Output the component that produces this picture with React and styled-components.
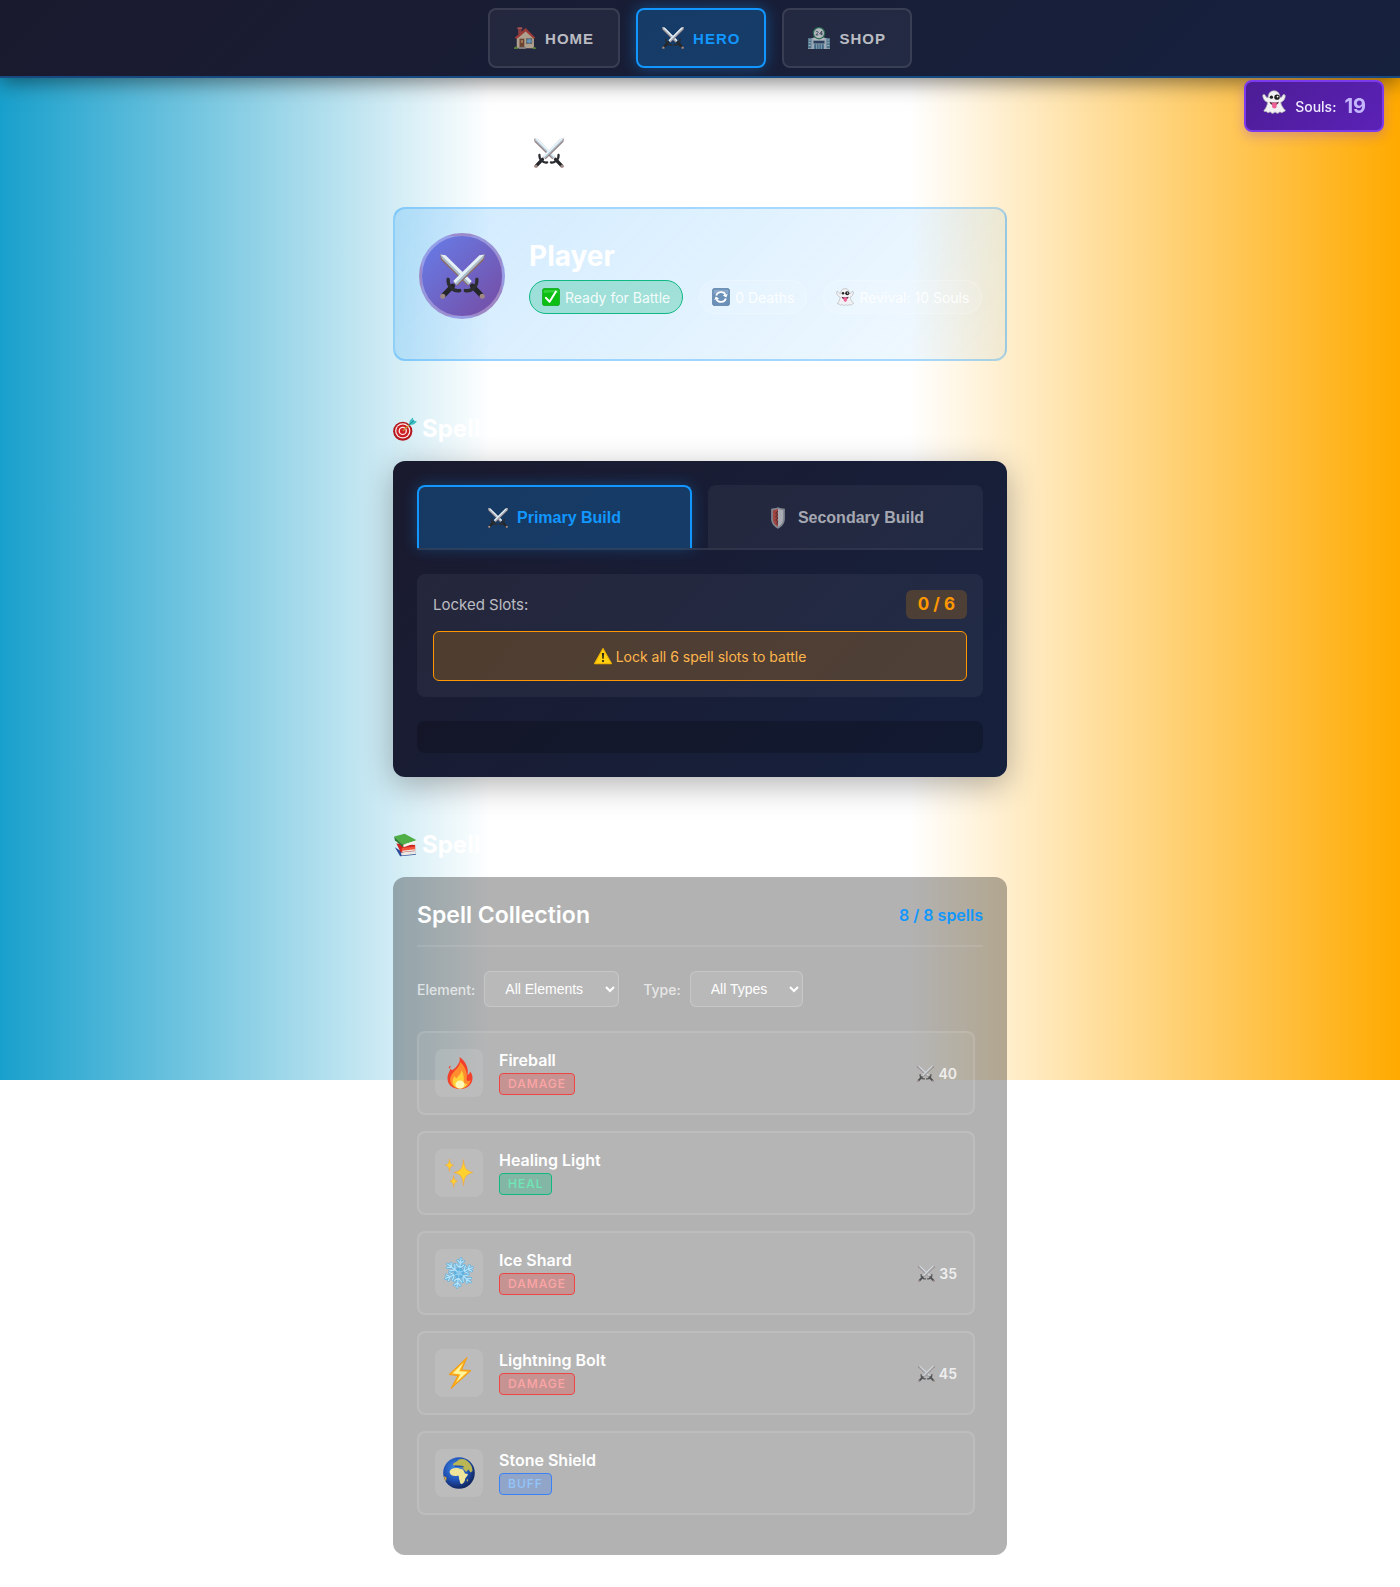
import React from "react";
import styled, { createGlobalStyle, css } from "styled-components";

const GlobalStyle = createGlobalStyle`
  *, *::before, *::after { box-sizing: border-box; }
  body {
    margin: 0;
    background: #ffffff;
    color: #ffffff;
    font-family: Inter, "Noto Sans", sans-serif;
    font-size: 16px;
  }
  h1, h2, h3, p, ul { margin: 0; padding: 0; }
  ul { list-style: none; }
`;

const uiFont = `"Liberation Sans", Arial, sans-serif`;

/* ---------- icons ---------- */

const Icon = styled.svg`
  display: block;
  flex: none;
  width: ${(p) => p.$size}px;
  height: ${(p) => p.$size}px;
  opacity: ${(p) => (p.$dim ? 0.7 : 1)};
`;

const Sword = ({ flip }) => (
  <g transform={flip ? "translate(32 0) scale(-1 1)" : undefined}>
    <path d="M31.8.4 31.4 4 12.4 22.6 9.6 20 28 1Z" fill="#8b6a68" />
    <path d="M31.8.4 28 .9 9.4 19.2 11.2 21.2Z" fill="#e4f1f8" />
    <path d="M31.8.4 30.6 3.4 11.8 22 10.8 20.8Z" fill="#a9bcc8" />
    <path d="M9 22.8 2.6 29.4" stroke="#24262a" strokeWidth="3.6" strokeLinecap="round" />
    <path d="M5.8 18C5.6 21 6.4 22.6 8 24 9.8 25.8 11.4 26.6 14 26" fill="none" stroke="#2b2d31" strokeWidth="2.4" strokeLinecap="round" />
    <circle cx="2" cy="30" r="1.8" fill="#a08884" />
  </g>
);

const drawings = {
  swords: (
    <>
      <Sword flip />
      <Sword />
    </>
  ),
  house: (
    <>
      <rect x="6" y="1" width="5" height="9" fill="#b8433b" />
      <rect x="5" y="0.5" width="7" height="2.5" fill="#d8695b" />
      <path d="M4 15 17 3.5 29 15V31H4Z" fill="#e9d3b0" />
      <path d="M1 15.5 17 1.5 31 15.5 29 17.5 17 6.5 4 17.5Z" fill="#cf4436" />
      <rect x="8" y="17" width="7" height="13" fill="#8d4f2c" />
      <rect x="10" y="19" width="3" height="4" fill="#d9a06b" />
      <rect x="18" y="17" width="8" height="7" fill="#4ea3dc" stroke="#8d6a4a" strokeWidth="1" />
      <path d="M22 17v7M18 20.500h8" stroke="#cfe6f5" strokeWidth="0.800" />
      <rect x="7" y="29" width="10" height="3" fill="#a9a199" />
      <path d="M0 31.500c0-3 3-4 5-2l1 2.500H0ZM27 32c0-3 3-4 5-2v2Z" fill="#6aa03a" />
    </>
  ),
  store: (
    <>
      <rect x="0" y="16" width="32" height="16" fill="#cfdfe6" />
      <rect x="8" y="15" width="16" height="4" fill="#eef4f6" />
      <rect x="0" y="16" width="5" height="15" fill="#5f93a8" />
      <rect x="27" y="16" width="5" height="15" fill="#5f93a8" />
      <path d="M1 19h3M1 23h3M1 27h3M28 19h3M28 23h3M28 27h3" stroke="#d9edf4" strokeWidth="1.5" />
      <rect x="8" y="20" width="16" height="4" fill="#31486b" />
      <rect x="9" y="25" width="14" height="7" fill="#4c86a4" />
      <path d="M12.500 25v7M16 25v7M19.500 25v7" stroke="#dcecf2" />
      <circle cx="16" cy="9" r="9" fill="#2f8a5b" />
      <circle cx="16" cy="9" r="7.200" fill="#f3f6f5" />
      <path d="M11.500 7.500c.5-2 3.500-1.500 3 .5-.3 1.200-2 2-3 3.500h3.500M20 12V6l-3 4h4" fill="none" stroke="#3c4a58" strokeWidth="1.300" />
    </>
  ),
  ghost: (
    <>
      <path
        d="M16 1C10.500 1 8.500 5 8.200 10 7 10.500 5.500 9.500 4.500 7.500 3.500 5 .8 5.500 1 8c.2 3.500 3 7.500 6.500 8.500C7 20 5.500 24 2.800 27c-.8 1.200.2 2 1.600 1.600 1-.3 1.800.2 2.400 1 .8 1 2 .8 3 .1.8-.6 1.800-.4 2.500.5 1 1.300 2.600 1.300 3.700.1.900-1 2-1 3 0 1.200 1.200 2.700 1 3.600-.2.7-.8 1.500-.9 2.400-.3 1 .6 2.200.7 2.900-.3.500-.7 1.200-.9 2-1 1.200-.2 1.500-1 .8-1.900C28 24 25.500 20 25 16.500c3.500-1 6-5 6-8.500 0-2.500-2.700-3-3.600-.6-.8 2-2 3-3.400 2.600C23.600 5 21.500 1 16 1Z"
        fill="#f1f1f3"
        stroke="#a9aaae"
        strokeWidth="1"
      />
      <circle cx="12.500" cy="9.500" r="2.200" fill="#222" />
      <circle cx="20" cy="9.500" r="3.600" fill="#222" />
      <circle cx="20.800" cy="8.800" r="1.200" fill="#fff" />
      <path d="M10 15.500c4 1.600 8.500 1.600 12.500 0-.5 3-3 4.500-6.300 4.500S10.500 18.500 10 15.500Z" fill="#5a2435" />
      <path d="M13.500 17h6v4.500c0 4-6 4-6 0Z" fill="#ee5f95" />
    </>
  ),
  check: (
    <>
      <rect x="0.500" y="0.500" width="31" height="31" rx="5" fill="#0cbf12" stroke="#0a9a10" />
      <path d="M3 3.500h26v6c-8-2-18-2-26 0Z" fill="#4ade50" opacity="0.600" />
      <path d="M7 17.500 13.500 24.500 24.500 6.500" fill="none" stroke="#fff" strokeWidth="3.600" strokeLinecap="round" strokeLinejoin="round" />
    </>
  ),
  refresh: (
    <>
      <rect x="0.500" y="0.500" width="31" height="31" rx="5" fill="#6b90b8" stroke="#4e759f" />
      <path d="M3 3h26v7c-8-2-18-2-26 0Z" fill="#9bb8d4" opacity="0.600" />
      <path d="M7.500 13.500c2-7.500 13-8.500 16.500-1.500M24.500 18.500c-2 7.500-13 8.500-16.500 1.500" fill="none" stroke="#fff" strokeWidth="3.200" />
      <path d="M28 10.500 25.500 17 19 13.500ZM4 21.500 6.500 15 13 18.500Z" fill="#fff" />
    </>
  ),
  target: (
    <>
      <circle cx="13" cy="19" r="12.800" fill="#b3161c" />
      <circle cx="13" cy="18.500" r="10.200" fill="#f6eceb" />
      <circle cx="13" cy="18.500" r="8.600" fill="#cf1f25" />
      <circle cx="13" cy="18.500" r="5.600" fill="#f6eceb" />
      <circle cx="13" cy="18.500" r="3.800" fill="#cf1f25" />
      <path d="M13 18.500 24 8.500" stroke="#c79a35" strokeWidth="1.800" />
      <path d="M21 11 22.500 4.500 26.500.5l.8 4L32 6 28 9.800Z" fill="#3cc0c4" />
      <path d="M21 11 28 4.500" stroke="#1d7f8c" strokeWidth="1.200" />
    </>
  ),
  shield: (
    <>
      <path d="M16 .5C12 2 8.500 2.500 6 2.500V17c0 7 4.500 11.500 10 14.500C21.500 28.500 26 24 26 17V2.500C23.500 2.500 20 2 16 .5Z" fill="#a9adb2" />
      <path d="M16 3C13 4 10.500 4.500 8.500 4.600V17c0 5.500 3 9 7.500 11.600Z" fill="#d8503f" />
      <path d="M16 3c3 1 5.500 1.500 7.500 1.600V17c0 5.500-3 9-7.500 11.600Z" fill="#e3e4e6" />
      <path d="m16 6-3.500 3 3.500 2-3.500 3 3.500 2-3.500 3L16 21.500 14 24l2 1" fill="none" stroke="#5b3430" strokeWidth="1.400" />
    </>
  ),
  warning: (
    <>
      <path d="M16 2.500 31 29.500H1Z" fill="#ffd012" stroke="#f0b400" strokeWidth="2" strokeLinejoin="round" />
      <path d="M14 10.500h4l-.8 10.500h-2.400Z" fill="#2a2413" />
      <circle cx="16" cy="25" r="2" fill="#2a2413" />
    </>
  ),
  books: (
    <g transform="translate(1.500 0)">
      <path d="M1 19 8 31 29 29V24L12 26Z" fill="#2d4b9b" />
      <path d="m9 26 20-2v4l-19 2Z" fill="#ebe8e2" />
      <path d="M3 14 9 26l19-2.500V16Z" fill="#cf2423" />
      <path d="m10 20 18-2v5l-18 2Z" fill="#f2553c" />
      <path d="m11 24.500 17-2" stroke="#efe9e2" strokeWidth="1.600" />
      <path d="M0 4.500 14 1l16 8.500L12 15.500Z" fill="#4fae45" />
      <path d="M12 15.500 30 9.500v3.500L12.500 19Z" fill="#f3f1ec" />
      <path d="M0 4.500 12 15.500V19L1 9.500Z" fill="#2f7e33" />
    </g>
  ),
  fire: (
    <g transform="translate(1 0)">
      <path d="M15.500 0C16.500 3.500 15 6.500 12.500 9.500 9.500 13 7.500 14 6.500 11.500 5.500 15 3.500 17 3.500 21.500 3.500 28 9 32 16 32s12.500-4.500 12.500-11c0-3-1-5-2.500-6.500-.3 2-1 3-2.500 3.500C25 12 22 4.500 15.500 0Z" fill="#f2402a" />
      <path d="M16 5c.5 4-5 8-7.500 11.500-2 3-3 5.500-2 8.500C8 29 11 31.500 16 31.500S26 28.500 26.500 23c-1.500 1.500-3 1.200-4 .3C24 17 21.500 9 16 5Z" fill="#ff8c2e" />
      <path d="M17.500 13c0 4-3 5-4.500 8-1 .2-2-.5-2.300-2C8.500 22 8 25 9.500 27.800 11 30.500 13 31.500 16 31.500s6.500-1.500 7.300-5c-1.500.7-3 .3-3.800-1 1-4.500 0-9-2-12.500Z" fill="#ffd23a" />
      <ellipse cx="16" cy="27.500" rx="4.500" ry="4" fill="#fff7b8" />
      <path d="M6.500 8.500c-1.500.8-2 2-1.500 3 1-.5 1.700-1.500 1.500-3Z" fill="#f2402a" />
    </g>
  ),
  sparkles: (
    <g fill="#ffd12f" stroke="#f3a43a" strokeWidth="0.600">
      <path d="M20.500 2.500c.8 8.500 2.500 11.500 9.500 13-7 1.500-8.700 4.500-9.500 13-.8-8.500-2.500-11.500-9.500-13 7-1.500 8.700-4.500 9.500-13Z" />
      <path d="M6.500 2c.4 4 1.200 5.400 4 6.200-2.800.8-3.600 2.300-4 6.300-.4-4-1.200-5.500-4-6.300 2.800-.8 3.600-2.200 4-6.200Z" />
      <path d="M10.700 18.500c.4 3.800 1.200 5 3.800 5.700-2.600.7-3.400 2-3.800 6-.4-4-1.200-5.300-3.800-6 2.600-.7 3.400-1.900 3.800-5.700Z" />
    </g>
  ),
  snow: (
    <g>
      {[0, 60, 120, 180, 240, 300].map((a) => (
        <g key={a} transform={`rotate(${a + 8} 16 16)`} fill="none" strokeLinecap="round">
          <path d="M16 16V1.500M16 11l-4-3.500M16 11l4-3.500M16 6.500 13 3.500M16 6.500l3-3M16 14l-3-1M16 14l3-1" stroke="#5fb0de" strokeWidth="2.600" />
          <path d="M16 16V1.500M16 11l-4-3.500M16 11l4-3.500M16 6.500 13 3.500M16 6.500l3-3" stroke="#b5e3fa" strokeWidth="1.300" />
        </g>
      ))}
      <circle cx="16" cy="16" r="2.500" fill="#8ccbed" />
    </g>
  ),
  bolt: (
    <>
      <path d="M24 .5 6 17.500 15 18.500 8 31.500 28 13.500 18.500 13Z" fill="#ffb01f" stroke="#f29a12" strokeLinejoin="round" />
      <path d="M20.500 5.500 9.500 16.500 17.500 17.200 13 25.500 24.500 14.800 16 14.200Z" fill="#fff59b" />
    </>
  ),
  globe: (
    <>
      <defs>
        <radialGradient id="sea" cx="40%" cy="35%" r="65%">
          <stop offset="0" stopColor="#3f8be6" />
          <stop offset="0.600" stopColor="#1f50b4" />
          <stop offset="1" stopColor="#12275f" />
        </radialGradient>
      </defs>
      <circle cx="16" cy="16" r="15.800" fill="url(#sea)" />
      <path d="M6.500 15c.5-3 3.500-4.500 8-4l5.500 1.500 2 4 3 .5c-.5 2.500-3 3.500-3 5.500 0 2-2 4.500-3.500 4.500-1.800 0-1.500-3-2.300-4.500-.6-1.500.3-3-1.200-4-2.500 1-7.500 1-8.500-3.500Z" fill="#eee59a" />
      <path d="M10 8c0-2 1.500-2.500 3-3l3-2.500c4-1.500 8 .5 10 3 2.500 2.500 3.500 5.500 3.500 8.500l-2 1.500-2-3-2.500 2.500-3-3.500-3-1.500-4-.5Z" fill="#b9b653" />
      <path d="M.8 19 3.500 20.500 3 24.500 1.800 22.500Z" fill="#d9a93c" />
      <path d="m23.500 23 1.500-1-.5 3Z" fill="#d5c860" />
      <path d="M11.500 9c3 .5 6-.5 9 1" stroke="#1f50b4" strokeWidth="1.500" fill="none" />
    </>
  ),
};

const Emoji = ({ name, size, dim }) => (
  <Icon viewBox="0 0 32 32" $size={size} $dim={dim} aria-hidden="true">
    {drawings[name]}
  </Icon>
);

/* ---------- page shell ---------- */

const Page = styled.div`
  padding-bottom: 32px;
  background: linear-gradient(90deg, #18a0cc 0%, #ffffff 35%, #ffffff 65%, #ffaa00 100%) no-repeat;
  background-size: 100% 1080px;
`;

const NavBar = styled.nav`
  display: flex;
  justify-content: center;
  gap: 16px;
  padding: 8px;
  background: linear-gradient(135deg, #1a1a2e 0%, #16213e 100%);
  border-bottom: 2px solid #174a80;
  box-shadow: 0 4px 20px rgba(0, 0, 0, 0.5);
`;

const NavButton = styled.button`
  display: flex;
  align-items: center;
  gap: 9px;
  height: 60px;
  padding: 0 24px;
  border: 2px solid ${(p) => (p.$active ? "#1197ff" : "rgba(255, 255, 255, 0.1)")};
  border-radius: 8px;
  background: ${(p) => (p.$active ? "rgba(17, 151, 255, 0.25)" : "rgba(255, 255, 255, 0.05)")};
  box-shadow: ${(p) => (p.$active ? "0 0 15px rgba(17, 151, 255, 0.4)" : "none")};
  color: ${(p) => (p.$active ? "#1197ff" : "rgba(255, 255, 255, 0.7)")};
  font: 700 15px ${uiFont};
  letter-spacing: 1px;
  text-transform: uppercase;
  cursor: pointer;
`;

const SoulsBadge = styled.aside`
  position: fixed;
  top: 80px;
  right: 16px;
  display: flex;
  align-items: center;
  gap: 8px;
  height: 52px;
  padding: 0 16px;
  border: 2px solid #7c3aed;
  border-radius: 8px;
  background: linear-gradient(135deg, #4c1d95 0%, #5b21b6 100%);
  box-shadow: 0 4px 12px rgba(124, 58, 237, 0.3);
`;

const SoulsIcon = styled.span`
  width: 25px;
  padding-bottom: 8px;
`;

const SoulsLabel = styled.span`
  color: #ede9fe;
  font-size: 14px;
  font-weight: 500;
`;

const SoulsCount = styled.strong`
  color: #c4b5fd;
  font-size: 20px;
  font-weight: 700;
`;

const Main = styled.main`
  width: 100%;
  max-width: 614px;
  margin: 0 auto;
  padding-top: 48px;
`;

const PageTitle = styled.h1`
  display: flex;
  align-items: center;
  justify-content: center;
  gap: 14px;
  margin-bottom: 27px;
  font-size: 32px;
  font-weight: 700;
  line-height: 54px;
`;

const SectionTitle = styled.h2`
  display: flex;
  align-items: center;
  gap: 5px;
  margin: 48px 0 12px;
  font-size: 24px;
  font-weight: 700;
  line-height: 40px;
`;

/* ---------- hero card ---------- */

const HeroCard = styled.section`
  display: flex;
  align-items: flex-start;
  gap: 24px;
  padding: 24px 24px 40px;
  border: 2px solid rgba(17, 151, 255, 0.3);
  border-radius: 12px;
  background: linear-gradient(135deg, rgba(17, 151, 255, 0.2) 0%, rgba(17, 151, 255, 0.05) 100%);
`;

const Avatar = styled.div`
  display: grid;
  place-items: center;
  flex: none;
  width: 86px;
  height: 86px;
  border: 3px solid rgba(255, 255, 255, 0.3);
  border-radius: 50%;
  background: linear-gradient(135deg, #667eea 0%, #764ba2 100%);
`;

const HeroName = styled.h2`
  font-size: 28px;
  font-weight: 700;
  line-height: 47px;
`;

const Statuses = styled.ul`
  display: flex;
  gap: 16px;
`;

const Status = styled.li`
  display: flex;
  align-items: center;
  gap: 5px;
  height: 34px;
  padding: 0 12px;
  border: 1px solid ${(p) => (p.$ready ? "#10b981" : "rgba(255, 255, 255, 0.2)")};
  border-radius: 17px;
  background: ${(p) => (p.$ready ? "rgba(16, 185, 129, 0.3)" : "rgba(255, 255, 255, 0.1)")};
  color: rgba(255, 255, 255, 0.9);
  font-size: 14px;
  white-space: nowrap;
`;

/* ---------- builds ---------- */

const BuildPanel = styled.section`
  padding: 24px;
  border-radius: 12px;
  background: linear-gradient(135deg, #1a1a2e 0%, #16213e 100%);
  box-shadow: 0 8px 32px rgba(0, 0, 0, 0.3);
`;

const Tabs = styled.div`
  display: grid;
  grid-template-columns: 1fr 1fr;
  gap: 16px;
  margin-bottom: 24px;
  border-bottom: 2px solid rgba(255, 255, 255, 0.1);
`;

const Tab = styled.button`
  display: flex;
  align-items: center;
  justify-content: center;
  gap: 9px;
  height: 63px;
  border: 2px solid transparent;
  border-bottom: 0;
  border-radius: 8px 8px 0 0;
  background: rgba(255, 255, 255, 0.05);
  color: rgba(255, 255, 255, 0.6);
  font: 700 16px ${uiFont};
  cursor: pointer;
  ${(p) =>
    p.$active &&
    css`
      border-color: #1197ff;
      background: rgba(17, 151, 255, 0.25);
      box-shadow: 0 0 15px rgba(17, 151, 255, 0.3);
      color: #1197ff;
    `}
`;

const LockBox = styled.div`
  display: grid;
  gap: 12px;
  margin-bottom: 24px;
  padding: 16px;
  border-radius: 8px;
  background: rgba(255, 255, 255, 0.05);
`;

const LockRow = styled.div`
  display: flex;
  align-items: center;
  justify-content: space-between;
  color: rgba(255, 255, 255, 0.7);
  font-size: 15px;
`;

const LockCount = styled.span`
  padding: 0 12px;
  border-radius: 6px;
  background: rgba(255, 152, 0, 0.2);
  color: #ff9800;
  font-size: 17px;
  font-weight: 700;
  line-height: 29px;
`;

const Warning = styled.p`
  display: flex;
  align-items: center;
  justify-content: center;
  gap: 4px;
  height: 50px;
  border: 1px solid #ff9800;
  border-radius: 6px;
  background: rgba(255, 152, 0, 0.2);
  color: #ffb74d;
  font-size: 14px;
`;

const SlotTray = styled.div`
  padding: 16px;
  border-radius: 8px;
  background: rgba(0, 0, 0, 0.2);
`;

/* ---------- collection ---------- */

const Collection = styled.section`
  padding: 24px;
  border-radius: 12px;
  background: rgba(0, 0, 0, 0.3);
`;

const CollectionHeader = styled.header`
  display: flex;
  align-items: center;
  justify-content: space-between;
  margin-bottom: 24px;
  padding-bottom: 16px;
  border-bottom: 2px solid rgba(255, 255, 255, 0.1);
`;

const CollectionTitle = styled.h3`
  font-size: 23px;
  font-weight: 600;
  line-height: 28px;
`;

const CollectionCount = styled.span`
  color: #1197ff;
  font-weight: 600;
`;

const Filters = styled.div`
  display: flex;
  gap: 24px;
  margin-bottom: 24px;
`;

const Filter = styled.label`
  display: flex;
  align-items: center;
  gap: 9px;
  color: rgba(255, 255, 255, 0.7);
  font-size: 14px;
  font-weight: 500;
`;

const Select = styled.select`
  height: 36px;
  padding: 0 0 0 16px;
  border: 1px solid rgba(255, 255, 255, 0.2);
  border-radius: 6px;
  background: rgba(255, 255, 255, 0.1);
  color: #ffffff;
  font: 14px ${uiFont};
  width: ${(p) => p.$width}px;

  option { color: #1a1a2e; }
`;

const SpellList = styled.ul`
  display: grid;
  gap: 16px;
  padding: 0 8px 16px 0;
`;

const SpellCard = styled.li`
  display: flex;
  align-items: center;
  gap: 16px;
  padding: 16px;
  border: 2px solid rgba(255, 255, 255, 0.1);
  border-radius: 8px;
  background: rgba(255, 255, 255, 0.05);
`;

const SpellIcon = styled.div`
  display: grid;
  place-items: center;
  width: 48px;
  height: 48px;
  border-radius: 8px;
  background: rgba(255, 255, 255, 0.1);
`;

const SpellInfo = styled.div`
  display: flex;
  flex: 1;
  flex-direction: column;
  align-items: flex-start;
  align-self: flex-start;
  gap: 2px;
`;

const SpellName = styled.h4`
  margin: 0;
  font-size: 16px;
  font-weight: 600;
  line-height: 22px;
`;

const tagColors = {
  damage: ["#ef4444", "rgba(239, 68, 68, 0.3)", "#fca5a5"],
  heal: ["#10b981", "rgba(16, 185, 129, 0.3)", "#6ee7b7"],
  buff: ["#3b82f6", "rgba(59, 130, 246, 0.3)", "#93c5fd"],
};

const Tag = styled.span`
  padding: 0 8px;
  border: 1px solid ${(p) => tagColors[p.$type][0]};
  border-radius: 4px;
  background: ${(p) => tagColors[p.$type][1]};
  color: ${(p) => tagColors[p.$type][2]};
  font-size: 12px;
  font-weight: 500;
  letter-spacing: 1px;
  line-height: 20px;
  text-transform: uppercase;
`;

const Power = styled.span`
  display: flex;
  align-items: center;
  gap: 4px;
  color: rgba(255, 255, 255, 0.8);
  font-size: 14px;
  font-weight: 600;
`;

const spells = [
  { name: "Fireball", type: "damage", icon: "fire", power: 40 },
  { name: "Healing Light", type: "heal", icon: "sparkles" },
  { name: "Ice Shard", type: "damage", icon: "snow", power: 35 },
  { name: "Lightning Bolt", type: "damage", icon: "bolt", power: 45 },
  { name: "Stone Shield", type: "buff", icon: "globe" },
];

export default function App() {
  return (
    <Page>
      <GlobalStyle />
      <NavBar>
        <NavButton type="button"><Emoji name="house" size={22} dim />Home</NavButton>
        <NavButton type="button" $active aria-current="page"><Emoji name="swords" size={22} />Hero</NavButton>
        <NavButton type="button"><Emoji name="store" size={22} dim />Shop</NavButton>
      </NavBar>

      <SoulsBadge>
        <SoulsIcon><Emoji name="ghost" size={24} /></SoulsIcon>
        <SoulsLabel>Souls:</SoulsLabel>
        <SoulsCount>19</SoulsCount>
      </SoulsBadge>

      <Main>
        <PageTitle><Emoji name="swords" size={30} />Hero Management</PageTitle>

        <HeroCard>
          <Avatar><Emoji name="swords" size={45} /></Avatar>
          <div>
            <HeroName>Player</HeroName>
            <Statuses>
              <Status $ready><Emoji name="check" size={18} />Ready for Battle</Status>
              <Status><Emoji name="refresh" size={18} />0 Deaths</Status>
              <Status><Emoji name="ghost" size={18} />Revival: 10 Souls</Status>
            </Statuses>
          </div>
        </HeroCard>

        <SectionTitle><Emoji name="target" size={24} />Spell Builds</SectionTitle>
        <BuildPanel>
          <Tabs role="tablist">
            <Tab type="button" role="tab" aria-selected="true" $active>
              <Emoji name="swords" size={20} />Primary Build
            </Tab>
            <Tab type="button" role="tab" aria-selected="false">
              <Emoji name="shield" size={22} dim />Secondary Build
            </Tab>
          </Tabs>
          <LockBox>
            <LockRow>Locked Slots:<LockCount>0 / 6</LockCount></LockRow>
            <Warning><Emoji name="warning" size={18} />Lock all 6 spell slots to battle</Warning>
          </LockBox>
          <SlotTray />
        </BuildPanel>

        <SectionTitle><Emoji name="books" size={24} />Spell Collection</SectionTitle>
        <Collection>
          <CollectionHeader>
            <CollectionTitle>Spell Collection</CollectionTitle>
            <CollectionCount>8 / 8 spells</CollectionCount>
          </CollectionHeader>
          <Filters>
            <Filter>
              Element:
              <Select $width={135}><option>All Elements</option></Select>
            </Filter>
            <Filter>
              Type:
              <Select $width={113}><option>All Types</option></Select>
            </Filter>
          </Filters>
          <SpellList>
            {spells.map((s) => (
              <SpellCard key={s.name}>
                <SpellIcon><Emoji name={s.icon} size={32} /></SpellIcon>
                <SpellInfo>
                  <SpellName>{s.name}</SpellName>
                  <Tag $type={s.type}>{s.type}</Tag>
                </SpellInfo>
                {s.power && <Power><Emoji name="swords" size={17} dim />{s.power}</Power>}
              </SpellCard>
            ))}
          </SpellList>
        </Collection>
      </Main>
    </Page>
  );
}
